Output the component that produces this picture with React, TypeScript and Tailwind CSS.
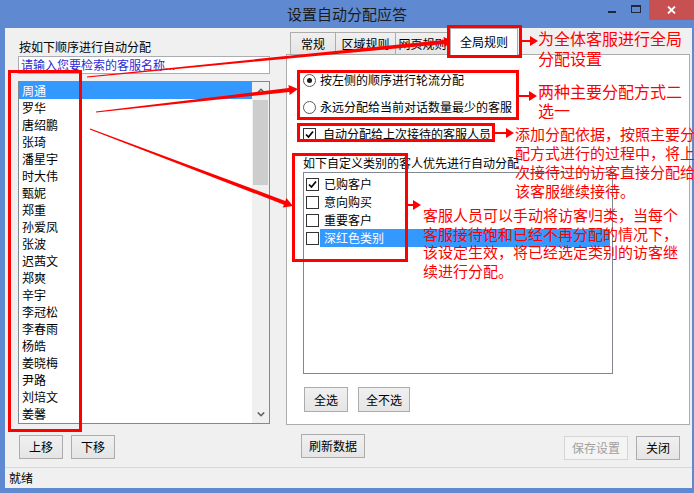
import React from "react";

const names = [
  "周通", "罗华", "唐绍鹏", "张琦", "潘星宇", "时大伟", "甄妮", "郑重", "孙爱凤", "张波",
  "迟茜文", "郑爽", "辛宇", "李冠松", "李春雨", "杨皓", "姜晓梅", "尹路", "刘培文", "姜馨",
];

const categories = [
  { label: "已购客户", checked: true },
  { label: "意向购买", checked: false },
  { label: "重要客户", checked: false },
  { label: "深红色类别", checked: false, selected: true },
];

function CheckBox({ checked }: { checked: boolean }) {
  return (
    <div className="w-[13px] h-[13px] shrink-0 border border-[#333333] bg-white flex items-center justify-center">
      {checked && (
        <svg width="11" height="11" viewBox="0 0 11 11">
          <path d="M2 5.5 L4.5 8 L9 2.5" stroke="#000" strokeWidth="1.7" fill="none" />
        </svg>
      )}
    </div>
  );
}

function Radio({ checked }: { checked: boolean }) {
  return (
    <div className="w-[13px] h-[13px] shrink-0 rounded-full border border-[#5a5a5a] bg-white flex items-center justify-center">
      {checked && <div className="w-[5px] h-[5px] rounded-full bg-[#1a1a1a]" />}
    </div>
  );
}

function Btn({ label, w, disabled }: { label: string; w: string; disabled?: boolean }) {
  return (
    <div
      className={`${w} h-full flex items-center justify-center border ${
        disabled
          ? "border-[#d5d5d5] bg-[#f4f4f4] text-[#a0a0a0]"
          : "border-[#acacac] bg-linear-to-b from-[#f0f0f0] to-[#e5e5e5] text-black"
      }`}
    >
      {label}
    </div>
  );
}

// tapered arrow from (x1,y1) to tip (x2,y2)
function arrowPoints(x1: number, y1: number, x2: number, y2: number, w0: number, w1: number, L: number, H: number) {
  const dx = x2 - x1;
  const dy = y2 - y1;
  const len = Math.hypot(dx, dy);
  const ux = dx / len;
  const uy = dy / len;
  const nx = -uy;
  const ny = ux;
  const bx = x2 - ux * L;
  const by = y2 - uy * L;
  const p = (x: number, y: number) => `${x.toFixed(1)},${y.toFixed(1)}`;
  return [
    p(x1 + (nx * w0) / 2, y1 + (ny * w0) / 2),
    p(bx + (nx * w1) / 2, by + (ny * w1) / 2),
    p(bx + nx * H, by + ny * H),
    p(x2, y2),
    p(bx - nx * H, by - ny * H),
    p(bx - (nx * w1) / 2, by - (ny * w1) / 2),
    p(x1 - (nx * w0) / 2, y1 - (ny * w0) / 2),
  ].join(" ");
}

function Annotations() {
  const boxes = [
    [8, 70, 82, 432],
    [447, 25, 522, 58],
    [297, 70, 519, 120],
    [297, 123, 495, 142],
    [292, 153, 408, 262],
  ];
  const arrows = [
    arrowPoints(87, 77, 453, 41, 1, 4, 9, 5),
    arrowPoints(96, 112, 298, 89, 1, 4, 9, 5),
    arrowPoints(90, 129, 293, 206, 1, 4, 9, 5),
    arrowPoints(522, 41, 538, 41, 2, 2, 8, 5),
    arrowPoints(519, 96, 537, 96, 2, 2, 8, 5),
    arrowPoints(495, 133, 514, 133, 2, 2, 8, 5),
    arrowPoints(408, 205, 421, 205, 2, 2, 8, 5),
  ];
  return (
    <svg className="absolute left-0 top-0 pointer-events-none" width="694" height="493">
      {boxes.map(([x1, y1, x2, y2], i) => (
        <rect key={i} x={x1 + 1.5} y={y1 + 1.5} width={x2 - x1 - 3} height={y2 - y1 - 3} fill="none" stroke="#ff0000" strokeWidth="3" />
      ))}
      {arrows.map((pts, i) => (
        <polygon key={i} points={pts} fill="#ff0000" />
      ))}
    </svg>
  );
}

function Notes() {
  return (
    <>
      <div className="absolute left-[538px] top-[28px] text-[16px] leading-[20px] text-[#ff0000] whitespace-nowrap">
        <div>为全体客服进行全局</div>
        <div>分配设置</div>
      </div>
      <div className="absolute left-[538px] top-[82px] text-[16px] leading-[19px] text-[#ff0000] whitespace-nowrap">
        <div>两种主要分配方式二</div>
        <div>选一</div>
      </div>
      <div className="absolute left-[515px] top-[124px] text-[15px] leading-[19px] text-[#ff0000] whitespace-nowrap">
        <div>添加分配依据，按照主要分</div>
        <div>配方式进行的过程中，将上</div>
        <div>次接待过的访客直接分配给</div>
        <div>该客服继续接待。</div>
      </div>
      <div className="absolute left-[423px] top-[206px] text-[15px] leading-[18.7px] text-[#ff0000] whitespace-nowrap">
        <div>客服人员可以手动将访客归类，当每个</div>
        <div>客服接待饱和已经不再分配的情况下，</div>
        <div>该设定生效，将已经选定类别的访客继</div>
        <div>续进行分配。</div>
      </div>
    </>
  );
}

export default function App() {
  return (
    <div className="relative w-[694px] h-[493px] overflow-hidden bg-[#5f8ad2] font-['Noto_Sans_CJK_SC','Noto_Sans',sans-serif] text-[12px] text-black">
      {/* title bar */}
      <div className="h-[28px] flex">
        <div className="w-[94px]" />
        <div className="flex-1 text-center text-[15px] leading-[28px] text-[#1a1a1a]">设置自动分配应答</div>
        <div className="w-[94px] flex h-[20px]">
          <div className="w-[23px] flex justify-center pt-[11px]">
            <div className="w-[8px] h-[2px] bg-[#1e2a3a]" />
          </div>
          <div className="w-[26px] flex justify-center pt-[5px]">
            <div className="w-[10px] h-[8px] border border-t-2 border-[#1e2a3a]" />
          </div>
          <div className="w-[45px] bg-[#c75050] flex items-center justify-center">
            <svg width="9" height="8" viewBox="0 0 9 8">
              <path d="M1 0.5 L8 7.5 M8 0.5 L1 7.5" stroke="#fff" strokeWidth="1.8" />
            </svg>
          </div>
        </div>
      </div>

      {/* body */}
      <div className="ml-[5px] mr-[2px] h-[460px] bg-[#f0f0f0] flex flex-col">
        <div className="h-[439px] flex">
          {/* left column */}
          <div className="ml-[13px] w-[252px] flex flex-col">
            <div className="mt-[11px] h-[16px] leading-[16px] pl-[1px]">按如下顺序进行自动分配</div>
            <div className="mt-[1px] h-[18px] border border-[#abadb3] bg-white pl-[2px] leading-[16px] text-[#2b2bd6]">
              请输入您要检索的客服名称...
            </div>
            <div className="mt-[7px] h-[343px] border border-[#828790] bg-white flex">
              <div className="flex-1">
                {names.map((n, i) => (
                  <div
                    key={n}
                    className={`h-[17px] leading-[17px] pl-[3px] ${i === 0 ? "bg-[#3399ff] text-white" : ""}`}
                  >
                    {n}
                  </div>
                ))}
              </div>
              <div className="w-[17px] bg-[#f0f0f0] flex flex-col items-center">
                <div className="h-[17px] flex items-center justify-center">
                  <svg width="8" height="5" viewBox="0 0 8 5">
                    <path d="M0.8 4.5 L4 1.3 L7.2 4.5" stroke="#606060" strokeWidth="1.6" fill="none" />
                  </svg>
                </div>
                <div className="mt-[1px] w-[15px] h-[85px] bg-[#cdcdcd]" />
                <div className="flex-1" />
                <div className="h-[17px] flex items-center justify-center">
                  <svg width="8" height="5" viewBox="0 0 8 5">
                    <path d="M0.8 0.5 L4 3.7 L7.2 0.5" stroke="#606060" strokeWidth="1.6" fill="none" />
                  </svg>
                </div>
              </div>
            </div>
            <div className="mt-[11px] h-[24px] flex gap-[8px] pl-[1px]">
              <Btn label="上移" w="w-[44px]" />
              <Btn label="下移" w="w-[44px]" />
            </div>
          </div>

          {/* right column */}
          <div className="ml-[16px] w-[404px] flex flex-col">
            <div className="h-[26px] flex items-end pl-[4px]">
              <div className="w-[46px] h-[22px] border border-b-0 border-[#acacac] bg-linear-to-b from-[#f0f0f0] to-[#e5e5e5] flex items-center justify-center">
                常规
              </div>
              <div className="w-[60px] h-[22px] border border-l-0 border-b-0 border-[#acacac] bg-linear-to-b from-[#f0f0f0] to-[#e5e5e5] flex items-center justify-center">
                区域规则
              </div>
              <div className="w-[54px] h-[22px] border border-l-0 border-b-0 border-[#acacac] bg-linear-to-b from-[#f0f0f0] to-[#e5e5e5] flex items-center justify-center">
                网页规则
              </div>
              <div className="relative z-10 -mb-px w-[68px] h-[27px] border border-b-0 border-[#acacac] bg-white flex items-center justify-center">
                全局规则
              </div>
            </div>
            <div className="h-[371px] border border-[#acacac] bg-white flex flex-col pl-[16px]">
              <div className="mt-[15px] h-[20px] flex items-center">
                <Radio checked />
                <span className="ml-[4px]">按左侧的顺序进行轮流分配</span>
              </div>
              <div className="mt-[7px] h-[20px] flex items-center">
                <Radio checked={false} />
                <span className="ml-[4px]">永远分配给当前对话数量最少的客服</span>
              </div>
              <div className="mt-[7px] h-[20px] flex items-center">
                <CheckBox checked />
                <span className="ml-[7px]">自动分配给上次接待的客服人员</span>
              </div>
              <div className="mt-[11px] h-[16px] leading-[16px]">如下自定义类别的客人优先进行自动分配</div>
              <div className="mt-[1px] w-[310px] h-[202px] border border-[#828790] bg-white pt-[2px] pl-[2px] pr-[2px]">
                {categories.map((c) => (
                  <div key={c.label} className="h-[18px] flex items-center">
                    <CheckBox checked={c.checked} />
                    <div
                      className={`ml-[1px] flex-1 h-[18px] leading-[18px] pl-[4px] ${
                        c.selected ? "bg-[#3399ff] text-white" : ""
                      }`}
                    >
                      {c.label}
                    </div>
                  </div>
                ))}
              </div>
              <div className="mt-[13px] h-[25px] flex gap-[10px] pl-[1px]">
                <Btn label="全选" w="w-[44px]" />
                <Btn label="全不选" w="w-[52px]" />
              </div>
            </div>
            <div className="mt-[9px] flex items-start pl-[15px] pr-[10px]">
              <div className="h-[24px]">
                <Btn label="刷新数据" w="w-[64px]" />
              </div>
              <div className="ml-auto mt-[2px] h-[24px]">
                <Btn label="保存设置" w="w-[64px]" disabled />
              </div>
              <div className="ml-[8px] mt-[2px] h-[24px]">
                <Btn label="关闭" w="w-[44px]" />
              </div>
            </div>
          </div>
        </div>

        {/* status bar */}
        <div className="h-[21px] border-t border-[#d7d7d7] pl-[4px] leading-[20px]">就绪</div>
      </div>

      <Annotations />
      <Notes />
    </div>
  );
}
